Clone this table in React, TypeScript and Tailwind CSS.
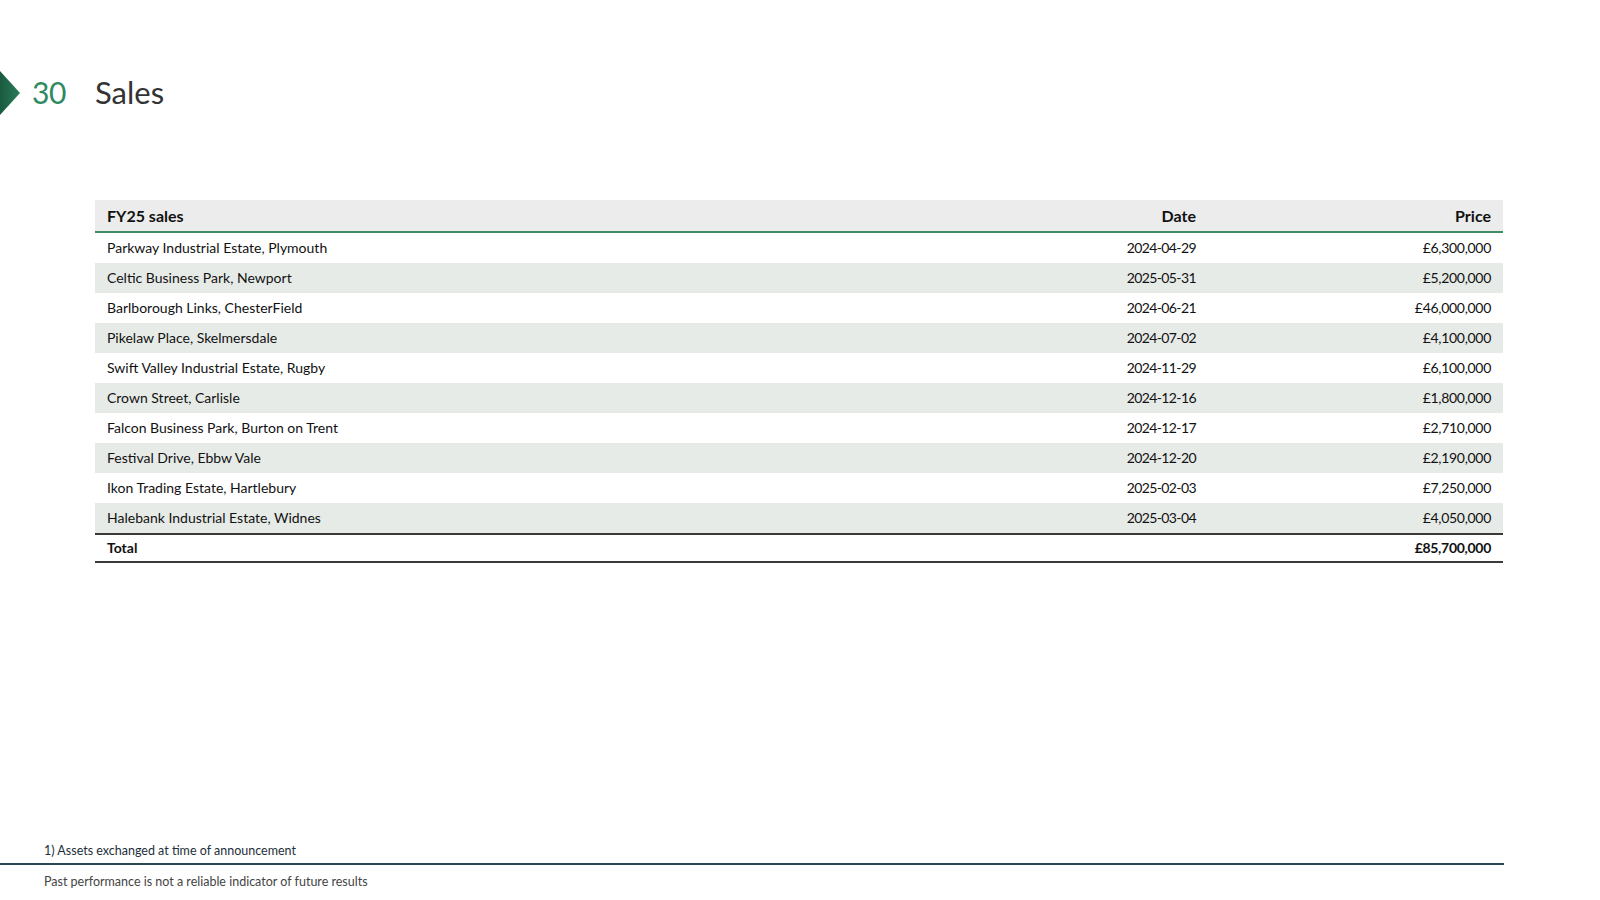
import React from 'react'

const rows = [
  ['Parkway Industrial Estate, Plymouth', '2024-04-29', '£6,300,000'],
  ['Celtic Business Park, Newport', '2025-05-31', '£5,200,000'],
  ['Barlborough Links, ChesterField', '2024-06-21', '£46,000,000'],
  ['Pikelaw Place, Skelmersdale', '2024-07-02', '£4,100,000'],
  ['Swift Valley Industrial Estate, Rugby', '2024-11-29', '£6,100,000'],
  ['Crown Street, Carlisle', '2024-12-16', '£1,800,000'],
  ['Falcon Business Park, Burton on Trent', '2024-12-17', '£2,710,000'],
  ['Festival Drive, Ebbw Vale', '2024-12-20', '£2,190,000'],
  ['Ikon Trading Estate, Hartlebury', '2025-02-03', '£7,250,000'],
  ['Halebank Industrial Estate, Widnes', '2025-03-04', '£4,050,000'],
]

const App = () => {
  return (
    <div
      className="w-[1600px] h-[900px] bg-white flex flex-col text-[#111]"
      style={{ fontFamily: 'Lato, "Open Sans", sans-serif' }}
    >
      {/* title */}
      <div className="flex items-center h-[50px] mt-[67px]">
        <svg width="20" height="46" viewBox="0 0 20 46" className="shrink-0">
          <defs>
            <linearGradient id="arr" x1="0" y1="0" x2="1" y2="0">
              <stop offset="0" stopColor="#1a5a3f" />
              <stop offset="1" stopColor="#2a7d58" />
            </linearGradient>
          </defs>
          <polygon points="0,2 20,24 0,46" fill="url(#arr)" />
        </svg>
        <span className="ml-[12px] w-[63px] text-[30px] text-[#2e8a60] leading-none tracking-[-0.5px]">30</span>
        <span className="text-[31px] text-[#333] leading-none">Sales</span>
      </div>

      {/* table */}
      <div className="mt-[83px] ml-[95px] w-[1408px]">
        <div className="flex items-center h-[33px] bg-[#ececec] border-b-2 border-[#3f8d68] font-bold text-[16px] px-3">
          <div className="flex-1">FY25 sales</div>
          <div className="w-[200px] text-right">Date</div>
          <div className="w-[295px] text-right">Price</div>
        </div>
        {rows.map((r, i) => (
          <div
            key={i}
            className={
              'flex items-center h-[30px] text-[14px] px-3 ' +
              (i % 2 === 1 ? 'bg-[#e7ebe8]' : 'bg-white')
            }
          >
            <div className="flex-1 pb-[1px]">{r[0]}</div>
            <div className="w-[200px] text-right tracking-[-0.6px] pb-[1px]">{r[1]}</div>
            <div className="w-[295px] text-right tracking-[-0.3px] pb-[1px]">{r[2]}</div>
          </div>
        ))}
        <div className="flex items-center h-[30px] text-[14px] font-bold px-3 border-t-2 border-b-2 border-[#3a3a3a]">
          <div className="flex-1 pb-[1px]">Total</div>
          <div className="w-[200px] text-right"></div>
          <div className="w-[295px] text-right tracking-[-0.3px] pb-[1px]">£85,700,000</div>
        </div>
      </div>

      {/* footer */}
      <div className="mt-auto">
        <div className="pl-[44px] text-[12.5px] text-[#1d2f3a] pb-[3px]">1) Assets exchanged at time of announcement</div>
        <div className="w-[1504px] h-[2px] bg-[#294852]" />
        <div className="pl-[44px] text-[12.5px] text-[#444] pt-[8px] pb-[8px]">Past performance is not a reliable indicator of future results</div>
      </div>
    </div>
  )
}

export default App
